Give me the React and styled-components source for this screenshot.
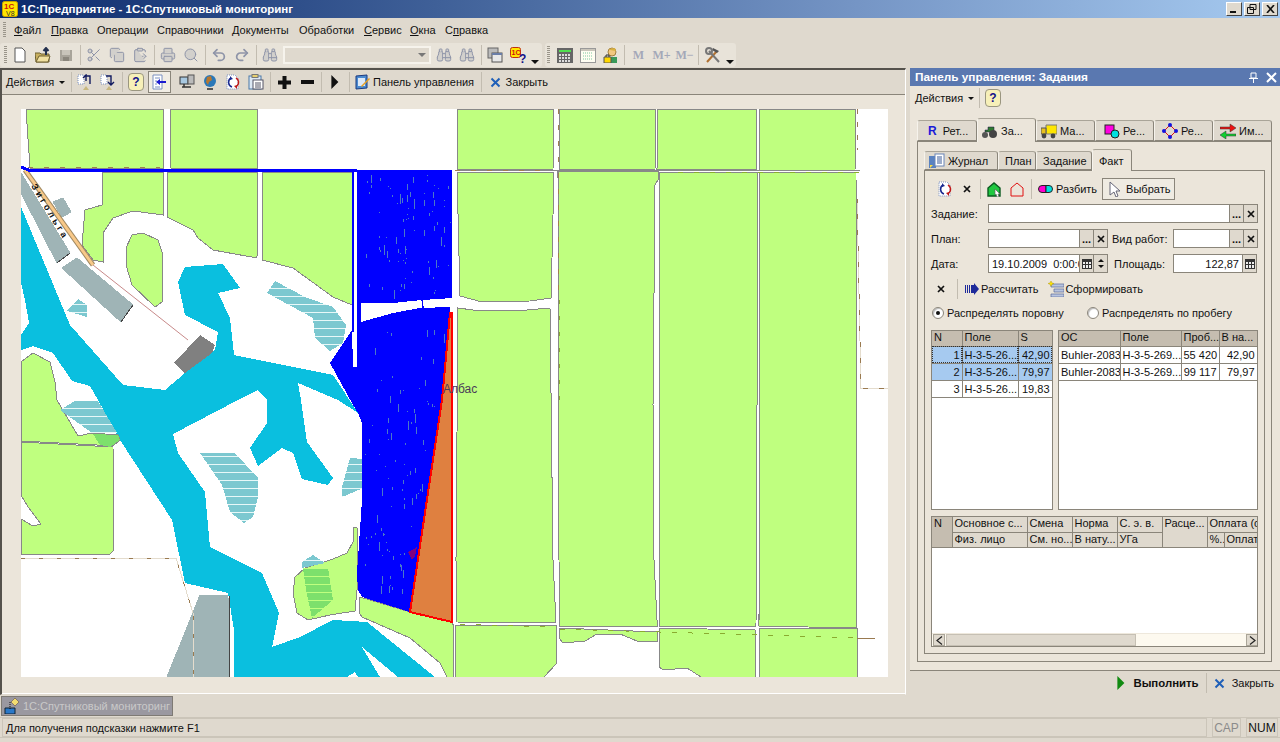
import React from 'react';
import styled, { createGlobalStyle } from 'styled-components';
import { Scissors, Copy, ClipboardPaste, Printer, Search, Undo2, Redo2, Binoculars } from 'lucide-react';

const uiFont = '"Liberation Sans", Arial, sans-serif';
const face = '#dfd9ce';
const panel = '#ebe5da';
const line = '#8a857a';
const soft = '#c2bcb0';

const GlobalStyle = createGlobalStyle`
  html, body { margin: 0; padding: 0; background: ${face}; }
  body { font: 11px ${uiFont}; color: #111; }
  * { box-sizing: border-box; }
`;

const Screen = styled.div`
  width: 1280px;
  height: 742px;
  display: flex;
  flex-direction: column;
  overflow: hidden;
  background: ${face};
`;

const TitleBar = styled.div`
  height: 18px;
  flex: none;
  display: flex;
  align-items: center;
  padding: 0 2px;
  background: linear-gradient(90deg, #0c2a6c, #3f6098 34%, #7595c5 67%, #a6caf0);
`;

const TitleText = styled.span`
  margin-left: 3px;
  color: #fff;
  font-size: 11.5px;
  font-weight: bold;
  flex: 1;
`;

const WinButton = styled.span`
  width: 16px;
  height: 14px;
  margin-left: 2px;
  display: flex;
  align-items: center;
  justify-content: center;
  background: ${face};
  border: 1px solid;
  border-color: #fff #444 #444 #fff;
`;

const MenuBar = styled.div`
  height: 24px;
  flex: none;
  display: flex;
  align-items: center;
  padding-left: 3px;
`;

const Grip = styled.span`
  width: 3px;
  height: ${p => p.$h || 16}px;
  margin-right: ${p => p.$gap || 0}px;
  flex: none;
  background: repeating-linear-gradient(180deg, #9a958a 0 1px, transparent 1px 2px);
`;

const MenuItem = styled.span`
  width: ${p => p.$w}px;
  flex: none;
  u { text-decoration-thickness: 1px; text-underline-offset: 1px; }
`;

const ToolRow = styled.div`
  height: 26px;
  flex: none;
  display: flex;
  align-items: flex-start;
`;

const ToolGroup = styled.div`
  height: 24px;
  margin: 1px 3px 0 ${p => p.$ml || 0}px;
  padding-left: ${p => p.$pl || 0}px;
  display: flex;
  align-items: center;
  background: #e8e3d9;
  border-radius: 3px;
`;

const Slot = styled.span`
  width: ${p => p.$w || 23}px;
  height: 22px;
  margin-left: ${p => p.$ml || 0}px;
  flex: none;
  display: flex;
  align-items: center;
  justify-content: center;
  color: #8e94a8;
  ${p => p.$pressed && `
    border: 1px solid #8a857a;
    background: #f1ede4;
  `}
`;

const Sep = styled.span`
  width: 5px;
  height: 20px;
  flex: none;
  display: flex;
  justify-content: center;
  &::before { content: ''; width: 1px; background: ${soft}; }
`;

const Combo = styled.span`
  width: 148px;
  height: 18px;
  margin-left: 1.5px;
  display: flex;
  flex: none;
  border: 2px solid #f6f3ec;
  background: ${face};
  justify-content: flex-end;
  align-items: center;
`;

const DropArrow = styled.span`
  width: 0;
  height: 0;
  flex: none;
  border-left: ${p => p.$s || 4}px solid transparent;
  border-right: ${p => p.$s || 4}px solid transparent;
  border-top: ${p => p.$s || 4}px solid ${p => p.$c || '#111'};
  margin-left: ${p => p.$ml || 0}px;
  margin-right: ${p => p.$mr || 0}px;
  margin-top: ${p => p.$mt || 0}px;
`;

const UpArrow = styled(DropArrow)`
  transform: rotate(180deg);
`;

const MaskM = styled.span`
  color: #a4a8b8;
  font: bold 12px "Liberation Serif", serif;
`;

const Workspace = styled.div`
  height: 627px;
  flex: none;
  display: flex;
`;

const MapWindow = styled.div`
  width: 906px;
  flex: none;
  display: flex;
  flex-direction: column;
  border-top: 2px solid #55524c;
  border-left: 2px solid #55524c;
  border-right: 1px solid #fff;
  border-bottom: 1px solid ${face};
  background: ${panel};
`;

const WindowBar = styled.div`
  height: 25px;
  flex: none;
  display: flex;
  align-items: center;
  background: ${face};
  border-bottom: 1px solid ${line};
  padding-left: 4px;
`;

const ActionMenu = styled.span`
  display: flex;
  align-items: center;
  width: ${p => p.$w}px;
  flex: none;
`;

const TextButton = styled.span`
  display: flex;
  align-items: center;
  flex: none;
  white-space: nowrap;
  gap: ${p => p.$gap || 3}px;
  margin-left: ${p => p.$ml || 0}px;
  height: ${p => (p.$pressed ? 22 : 20)}px;
  padding: 0 ${p => (p.$pressed ? 4 : 0)}px;
  ${p => p.$pressed && `border: 1px solid #8a857a; background: #efebe2;`}
`;

const Canvas = styled.div`
  flex: 1;
  padding: 14px 0 0 19px;
  border-bottom: 1px solid #fff;
`;

const MapSvg = styled.svg`
  display: block;
  background: #fff;
`;

const RoadLabel = styled.text`
  font: bold 9px ${uiFont};
  letter-spacing: 3px;
  fill: #111;
`;

const PlaceLabel = styled.text`
  font: 12px ${uiFont};
  fill: #4a3c58;
`;

const DockPanel = styled.div`
  width: 370px;
  margin-left: 4px;
  flex: none;
  display: flex;
  flex-direction: column;
  background: ${panel};
`;

const Caption = styled.div`
  height: 18px;
  flex: none;
  display: flex;
  align-items: center;
  padding: 0 3px 0 5px;
  gap: 8px;
  background: #5a78b0;
  color: #fff;
  font-size: 11.8px;
  font-weight: bold;
  span:first-child { flex: 1; }
`;

const ActionBar = styled.div`
  height: 24px;
  flex: none;
  display: flex;
  align-items: center;
  padding-left: 5px;
`;

const HelpBadge = styled.span`
  width: 16px;
  height: 18px;
  flex: none;
  margin-left: ${p => p.$ml || 0}px;
  display: flex;
  align-items: center;
  justify-content: center;
  background: #f7f0b8;
  border: 1px solid #9a9680;
  border-radius: 4px;
  color: #12128a;
  font: bold 12px ${uiFont};
`;

const DockBody = styled.div`
  height: 560px;
  flex: none;
  padding: 8px 8px 0 7px;
`;

const TabStrip = styled.div`
  display: flex;
  align-items: flex-end;
  height: ${p => p.$h}px;
  position: relative;
  z-index: 1;
`;

const Tab = styled.span`
  width: ${p => p.$w}px;
  height: ${p => (p.$active ? p.$h + 1 : p.$h - 2)}px;
  flex: none;
  display: flex;
  align-items: center;
  gap: 3px;
  padding-left: ${p => p.$pl || 4}px;
  margin-bottom: ${p => (p.$active ? -1 : 0)}px;
  border: 1px solid ${soft};
  border-color: #a9a498 ${line} ${line} #f6f3ec;
  border-bottom: ${p => (p.$active ? 'none' : `1px solid ${line}`)};
  border-radius: 3px 3px 0 0;
  background: ${p => (p.$active ? panel : face)};
`;

const TabLetter = styled.b`
  color: #1a1ad8;
  font-size: 12px;
  margin-right: 3px;
`;

const TabBody = styled.div`
  height: ${p => p.$h}px;
  border: 1px solid ${line};
  padding: ${p => p.$pad};
  background: ${panel};
`;

const SubBar = styled.div`
  height: 23px;
  display: flex;
  align-items: center;
  margin-left: ${p => p.$ml || 0}px;
`;

const Form = styled.div`
  margin-top: 4px;
  display: flex;
  flex-direction: column;
  gap: 6px;
`;

const FormRow = styled.div`
  height: 19px;
  display: flex;
  align-items: center;
`;

const FieldLabel = styled.span`
  width: ${p => p.$w}px;
  flex: none;
  white-space: nowrap;
  margin-left: ${p => p.$ml || 0}px;
`;

const Field = styled.span`
  width: ${p => p.$w}px;
  height: 100%;
  flex: none;
  display: flex;
  align-items: center;
  justify-content: ${p => (p.$right ? 'flex-end' : 'flex-start')};
  padding: 0 3px;
  background: #fff;
  border: 1px solid ${line};
  overflow: hidden;
  white-space: pre;
`;

const FieldBtn = styled.span`
  width: 14px;
  height: 100%;
  flex: none;
  display: flex;
  flex-direction: ${p => (p.$col ? 'column' : 'row')};
  align-items: center;
  justify-content: space-evenly;
  background: ${face};
  border: 1px solid ${line};
  border-left: none;
  font: bold 11px ${uiFont};
`;

const CommandBar = styled.div`
  height: 20px;
  margin-top: 6px;
  display: flex;
  align-items: center;
  padding-left: 6px;
`;

const RadioRow = styled.div`
  height: 14px;
  margin-top: 7px;
  display: flex;
  align-items: center;
`;

const Radio = styled.span`
  width: 12px;
  height: 12px;
  flex: none;
  margin-left: ${p => p.$ml || 0}px;
  margin-right: 3px;
  display: flex;
  align-items: center;
  justify-content: center;
  border-radius: 50%;
  background: #fff;
  border: 1px solid #8a857a;
  box-shadow: inset 1px 1px 1px #bbb;
  &::after {
    content: '';
    width: 4px;
    height: 4px;
    border-radius: 50%;
    background: ${p => (p.$on ? '#111' : 'transparent')};
  }
`;

const RadioLabel = styled.span`
  width: ${p => p.$w}px;
  flex: none;
  white-space: nowrap;
`;

const Tables = styled.div`
  margin-top: 10px;
  display: flex;
  gap: 5px;
  height: 180px;
`;

const TableBox = styled.div`
  width: ${p => p.$w}px;
  height: ${p => p.$h}px;
  flex: none;
  display: flex;
  flex-direction: column;
  margin-top: ${p => p.$mt || 0}px;
  border: 1px solid ${line};
  background: #fff;
  overflow: hidden;
`;

const Grid = styled.table`
  table-layout: fixed;
  border-collapse: collapse;
  width: ${p => p.$w}px;
  flex: none;
`;

const Head = styled.th`
  height: 15px;
  padding: 0 0 0 2px;
  font-weight: normal;
  text-align: left;
  vertical-align: top;
  white-space: nowrap;
  overflow: hidden;
  background: ${p => (p.$dark ? '#c5bdb0' : face)};
  border-right: 1px solid ${line};
  border-bottom: 1px solid ${line};
`;

const Cell = styled.td`
  height: 17px;
  padding: 0 2px;
  white-space: nowrap;
  overflow: hidden;
  text-align: ${p => (p.$num ? 'right' : 'left')};
  background: ${p => (p.$sel ? '#a6caf0' : '#fff')};
  border-right: 1px solid ${line};
  border-bottom: 1px solid ${line};
  ${p => p.$focus && 'outline: 1px dotted #333; outline-offset: -1px;'}
`;

const GridGap = styled.div`
  flex: 1;
`;

const ScrollBar = styled.div`
  height: 13px;
  flex: none;
  display: flex;
  align-items: stretch;
  background: #fdf9ef;
  border-top: 1px solid #eee8dc;
  padding: 0 1px;
`;

const ScrollBtn = styled.span`
  width: 12px;
  flex: none;
  display: flex;
  align-items: center;
  justify-content: center;
  background: ${face};
  border: 1px solid #aaa598;
  margin-left: ${p => p.$ml || 0}px;
`;

const ScrollThumb = styled.span`
  width: 190px;
  margin-left: 1px;
  flex: none;
  background: ${face};
  border: 1px solid #c6c0b4;
`;

const DockFooter = styled.div`
  height: 25px;
  flex: none;
  display: flex;
  align-items: center;
  justify-content: flex-end;
  padding-right: 6px;
  background: ${face};
  border-top: 1px solid ${line};
`;

const RunLabel = styled.span`
  font-size: 11.4px;
  font-weight: bold;
  margin-left: 8px;
`;

const TaskBar = styled.div`
  height: 23px;
  flex: none;
  display: flex;
  align-items: center;
  padding-left: 1px;
  border-bottom: 1px solid #cbc5b9;
`;

const TaskTab = styled.span`
  width: 172px;
  height: 20px;
  display: flex;
  align-items: center;
  gap: 3px;
  padding-left: 2px;
  background: #9a98a0;
  border: 1px solid #7e7a74;
  color: #c9c9c9;
  white-space: nowrap;
`;

const StatusBar = styled.div`
  height: 19px;
  flex: none;
  display: flex;
  align-items: stretch;
  padding: 0 2px;
  gap: 5px;
`;

const StatusBox = styled.span`
  width: ${p => p.$w}px;
  flex: ${p => (p.$grow ? 1 : 'none')};
  display: flex;
  align-items: center;
  justify-content: ${p => (p.$grow ? 'flex-start' : 'center')};
  padding-left: ${p => (p.$grow ? 3 : 0)}px;
  border: 1px solid #cbc5b9;
  font-size: ${p => (p.$grow ? 11 : 12)}px;
  color: ${p => (p.$dim ? '#8b8b8b' : '#111')};
`;

const BottomEdge = styled.div`
  flex: 1;
  border-top: 1px solid #cbc5b9;
`;

const Ico = ({ s = 16, children }) => (
  <svg width={s} height={s} viewBox="0 0 16 16">{children}</svg>
);

const Logo1C = () => (
  <svg width="16" height="16" viewBox="0 0 16 16">
    <rect x="0.5" y="0.5" width="15" height="15" rx="2" fill="#ffe600" stroke="#c8a000" />
    <text x="2" y="8" fontSize="8" fontWeight="bold" fill="#d01010" fontFamily="Liberation Sans">1C</text>
    <text x="4" y="15" fontSize="7" fill="#333" fontFamily="Liberation Sans">V8</text>
  </svg>
);

const DocNew = () => (
  <Ico><path d="M3 1h7l3 3v11H3z" fill="#fff" stroke="#555" /></Ico>
);

const FolderOpen = () => (
  <Ico>
    <path d="M0 6h5l1 1h8v8H1z" fill="#c8b060" stroke="#6e6030" />
    <path d="M1 15l3-6h11l-2 6z" fill="#f0e0a0" stroke="#6e6030" />
    <path d="M11 8V2M8.500 4L11 1l2.500 3" fill="none" stroke="#23304e" strokeWidth="2" />
  </Ico>
);

const Floppy = () => (
  <Ico>
    <path d="M2 3h12v11H2z" fill="#a8a49a" />
    <path d="M4 3h8v5H4z" fill="#c8c4ba" />
    <path d="M5 10h6v4H5z" fill="#8a867c" />
  </Ico>
);

const Muted = ({ icon: Icon }) => <Icon size={16} strokeWidth={1.5} color="#8e94a8" fill="#d2d0cc" />;

const WindowsIcon = () => (
  <Ico>
    <rect x="1" y="1" width="10" height="10" fill="#bbb" stroke="#666" />
    <rect x="5" y="6" width="10" height="9" fill="#e8e8e8" stroke="#555" />
    <path d="M5 6h10v2H5z" fill="#6a7ea8" />
  </Ico>
);

const HelpLogo = () => (
  <Ico>
    <rect x="0.5" y="0.5" width="10" height="10" rx="2" fill="#ffe600" stroke="#c03010" />
    <text x="1.500" y="8" fontSize="7" fontWeight="bold" fill="#d01010" fontFamily="Liberation Sans">1C</text>
    <text x="9" y="16" fontSize="12" fontWeight="bold" fill="#12128a" fontFamily="Liberation Sans">?</text>
  </Ico>
);

const CalcIcon = () => (
  <Ico>
    <rect x="0" y="1" width="16" height="15" fill="#666" />
    <rect x="2" y="3" width="12" height="2" fill="#50e050" />
    {[0, 1, 2].map(r => [0, 1, 2, 3].map(c => (
      <rect key={`${r}${c}`} x={2 + c * 3} y={7 + r * 3} width="2" height="2" fill="#ddd" />
    )))}
  </Ico>
);

const CalendarIcon = () => (
  <Ico>
    <rect x="0.5" y="1.500" width="15" height="14" fill="#fffef2" stroke="#999" />
    <path d="M1 2h14v2H1z" fill="#c9c5ba" />
    <path d="M3 6h10M3 9h10M3 12h10" stroke="#7cc7a0" strokeDasharray="1 1" />
  </Ico>
);

const UserLock = () => (
  <Ico>
    <circle cx="9" cy="5" r="4" fill="#f2c880" stroke="#a08040" />
    <path d="M6 2l6-1 1 3-6-1z" fill="#d8b040" />
    <path d="M7 10h7v6H7z" fill="#3a9a5a" />
    <path d="M1 10h7v6H1z" fill="#ffd800" stroke="#555" />
    <path d="M3 10V8h3v2" fill="none" stroke="#333" />
  </Ico>
);

const Tools = () => (
  <Ico>
    <path d="M2 15L12 4" stroke="#b07030" strokeWidth="2" />
    <path d="M14 15L4 4" stroke="#777" strokeWidth="2" />
    <path d="M8 1l6 3-2 2-5-3z" fill="#555" />
    <circle cx="4" cy="4" r="3" fill="none" stroke="#777" strokeWidth="2" />
  </Ico>
);

const ListArrow = ({ flip }) => (
  <Ico>
    <path d="M1 1h6v9H1z" fill="#fff" stroke="#7a90c0" strokeDasharray="1 1" />
    <path d={flip ? 'M6 2h5v8M8 8l3 3 3-3' : 'M13 10V2H8M6 4l3-3v6'} fill="none" stroke="#111a60" strokeWidth="1.400" />
    <path d="M9 12l3 4H6z" fill="#c8b880" />
  </Ico>
);

const DockLeft = () => (
  <Ico>
    <path d="M2 1h9v14H2z" fill="#fff" stroke="#7a90c0" />
    <path d="M4 4h5M4 7h2M4 10h2M4 13h5" stroke="#7a90c0" />
    <path d="M5 8l4-3v2h6v2H9v2z" fill="#1a1ad0" />
  </Ico>
);

const Network = () => (
  <Ico>
    <rect x="1" y="3" width="8" height="7" fill="#a8c8e0" stroke="#333" />
    <rect x="9" y="1" width="6" height="9" fill="#bbb" stroke="#555" />
    <path d="M3 13h9M5 10v3" stroke="#333" strokeWidth="1.500" />
  </Ico>
);

const Globe = () => (
  <Ico>
    <circle cx="8" cy="7" r="6" fill="#2a78b8" />
    <path d="M5 3l4-1 1 4-3 2-1 3-2-3z" fill="#b87830" />
    <path d="M5 15h6" stroke="#555" strokeWidth="2" />
  </Ico>
);

const Refresh = () => (
  <Ico>
    <path d="M2 1h8l3 3v11H2z" fill="#fff" stroke="#7a90c0" strokeDasharray="1 1" />
    <path d="M11 4a5 5 0 0 1 1 8" fill="none" stroke="#c01818" strokeWidth="1.500" />
    <path d="M7 13a5 5 0 0 1-1-9" fill="none" stroke="#1a2a90" strokeWidth="1.500" />
    <path d="M9 12l3 3v-4z" fill="#c01818" />
    <path d="M8 5L5 2v4z" fill="#1a2a90" />
  </Ico>
);

const ClipList = () => (
  <Ico>
    <rect x="1" y="2" width="12" height="13" fill="#dce8f4" stroke="#4a78a8" />
    <rect x="4" y="0.5" width="6" height="3" fill="#e8d070" stroke="#777" />
    <rect x="5" y="6" width="10" height="9" fill="#fff" stroke="#556" />
    <path d="M7 9h6M7 11h6M7 13h6" stroke="#556" />
  </Ico>
);

const PanelIcon = () => (
  <Ico>
    <path d="M1 2l11-1v13l-11 1z" fill="#4a8ad0" stroke="#1a3a80" />
    <path d="M3 4h7v8H3z" fill="#dce8f8" />
    <path d="M6 12l8-8 1 1-8 8z" fill="#e8a020" />
  </Ico>
);

const CloseX = ({ s = 11 }) => (
  <svg width={s} height={s} viewBox="0 0 11 11">
    <path d="M1.500 1.500l8 8M9.500 1.500l-8 8" stroke="#1f5fb8" strokeWidth="2" />
  </svg>
);

const SmallX = () => (
  <svg width="8" height="8" viewBox="0 0 8 8">
    <path d="M1 1l6 6M7 1L1 7" stroke="#111" strokeWidth="1.700" />
  </svg>
);

const Tractor = () => (
  <Ico>
    <path d="M6 4h6v5H3V7h3z" fill="#2f7a30" stroke="#214" strokeWidth="0.5" />
    <circle cx="11" cy="11" r="4" fill="#444" />
    <circle cx="3" cy="12" r="3" fill="#555" />
  </Ico>
);

const Truck = () => (
  <Ico>
    <path d="M5 2h11v9H5z" fill="#ffe600" stroke="#777" />
    <path d="M0 5h5v6H0z" fill="#e8c020" stroke="#555" />
    <circle cx="3" cy="13" r="2.400" fill="#444" />
    <circle cx="12" cy="13" r="2.400" fill="#444" />
  </Ico>
);

const Shapes = () => (
  <Ico>
    <rect x="1" y="2" width="9" height="9" fill="#ff00e0" stroke="#222" />
    <circle cx="11" cy="11" r="4" fill="#00e0e0" stroke="#222" />
  </Ico>
);

const NodeShape = () => (
  <Ico>
    <path d="M8 2l6 6-6 6-6-6z" fill="none" stroke="#e01010" />
    {[[8, 2], [14, 8], [8, 14], [2, 8]].map(([x, y]) => (
      <circle key={x + y * 20} cx={x} cy={y} r="2" fill="#1010e0" />
    ))}
  </Ico>
);

const SwapArrows = () => (
  <Ico>
    <path d="M0 4h10V1l6 4-6 4V6H0z" fill="#ee1010" stroke="#333" strokeWidth="0.5" />
    <path d="M16 11H6V8l-6 4 6 4v-3h10z" fill="#10d030" stroke="#333" strokeWidth="0.5" />
  </Ico>
);

const Journal = () => (
  <Ico>
    <rect x="0" y="3" width="7" height="12" fill="#5a82c0" />
    <path d="M1 12h3l-3 3z" fill="#ffe040" />
    <rect x="6" y="1" width="9" height="12" fill="#fff" stroke="#6a86b8" />
    <path d="M8 4h5M8 6h5M8 8h5M8 10h5" stroke="#3a5a98" />
  </Ico>
);

const Digitize = () => (
  <Ico>
    <path d="M2 7l6-5 6 5v8H2z" fill="#20c840" stroke="#0a5a20" strokeWidth="1.400" />
    <path d="M9 8l5 5-2 0 1 3-2 0-1-3-1 1z" fill="#fff" stroke="#666" strokeWidth="0.7" />
  </Ico>
);

const Outline = () => (
  <Ico><path d="M2 7l6-5 6 5v8H2z" fill="none" stroke="#e01010" /></Ico>
);

const Split = () => (
  <svg width="15" height="8" viewBox="0 0 15 8">
    <path d="M4 .5h4v7H4a3.500 3.500 0 0 1 0-7z" fill="#ff00d0" stroke="#222" />
    <path d="M8 .5h3a3.500 3.500 0 0 1 0 7H8z" fill="#00e0e0" stroke="#222" />
  </svg>
);

const Pointer = () => (
  <Ico><path d="M3 1l10 9H9l2 5-2 1-2-5-4 3z" fill="#fff" stroke="#667" /></Ico>
);

const CalcArrow = () => (
  <Ico>
    <path d="M1 4h1v8H1zM3 4h1v8H3zM5 4h1v8H5z" fill="#1e2a9a" />
    <path d="M7 4h3V2l5 6-5 6v-2H7z" fill="#1e2a9a" />
  </Ico>
);

const Generate = () => (
  <Ico>
    <path d="M3 3h13v3H3zM6 8h10v3H6zM3 13h13v3H3z" fill="#b8c4e0" stroke="#5a6a9a" strokeWidth="0.7" />
    <path d="M3 0l1 2 2 .5-2 .8-1 2-1-2L0 2.500 2 2z" fill="#ffe600" stroke="#a89000" strokeWidth="0.4" />
  </Ico>
);

const CalGrid = () => (
  <svg width="10" height="10" viewBox="0 0 10 10">
    <path d="M0 0h10v10H0z" fill="#333" />
    <path d="M1 3h2v2H1zM4 3h2v2H4zM7 3h2v2H7zM1 6h2v3H1zM4 6h2v3H4zM7 6h2v3H7z" fill="#eee" />
  </svg>
);

const Caret = ({ dir }) => (
  <svg width="7" height="9" viewBox="0 0 7 9">
    <path d={dir === 'left' ? 'M6 0.5L1 4.500l5 4' : 'M1 0.5l5 4-5 4'} fill="none" stroke="#222" strokeWidth="1.200" />
  </svg>
);

const TaskIcon = () => (
  <Ico>
    <path d="M1 10h10v6H1z" fill="#2a78c8" stroke="#123" />
    <path d="M6 4v7" stroke="#111" strokeDasharray="1 1" />
    <path d="M11 0l4 4-4 4-4-4z" fill="#f2dc70" stroke="#876" />
  </Ico>
);

const PlayArrow = ({ color, s = 14 }) => (
  <svg width={s * 0.7} height={s} viewBox="0 0 7 14">
    <path d="M0 0l7 7-7 7z" fill={color} />
  </svg>
);

const fields = [
  '26,109 163,109 163,168 30,168',
  '170,109 257,109 258,169 170,168',
  '102,172 163,172 163,215 133,211 113,218 103,233 103,262 93,260 82,245 85,210 102,205',
  '167,172 258,172 257,258 213,250 198,238 193,230 167,217',
  '262,172 352,173 352,305 333,297 293,268 262,260',
  '126,248 132,235 143,233 158,240 162,252 162,302 155,307 132,285 126,265',
  '21,362 33,353 50,362 55,382 57,400 78,436 92,433 118,435 120,440 113,446 97,445 40,442 21,441',
  '21,442 113,447 114,550 110,554 21,554 21,519 33,526 41,524 28,507 21,495',
  '295,577 305,568 333,559 347,553 353,542 354,527 357,528 357,590 355,611 330,615 308,620 297,613 293,593',
  '360,597 410,612 452,622 454,627 453,677 447,677 440,663 410,638 362,617 359,612',
  '457,109 554,109 553,169 457,169',
  '559,109 656,109 655,169 559,169',
  '658,109 756,109 757,169 657,169',
  '759,109 856,109 855,170 759,170',
  '457,172 554,172 552,258 551,298 530,301 482,302 460,296',
  '458,308 473,310 527,310 550,308 553,560 556,623 457,622 456,560',
  '558,171 658,171 658,180 655,185 653,405 654,560 657,620 657,626 560,626 559,560',
  '659,172 757,172 757,405 756,626 659,626',
  '760,172 856,172 857,628 759,626',
  '455,625 556,625 557,663 544,677 456,677',
  '559,628 657,632 657,641 637,641 620,634 597,634 585,641 563,643 559,638',
  '659,628 755,630 756,677 701,677 687,668 663,670 659,667',
  '759,628 857,628 857,677 759,677',
];

const water = '21,207 70,325 123,385 165,390 185,373 215,350 218,332 185,315 178,282 185,267 223,264 240,288 218,293 230,318 234,355 333,375 358,413 338,400 298,383 301,400 307,442 333,478 328,485 302,479 293,453 282,448 258,466 250,448 267,423 267,400 258,390 238,400 173,434 178,453 205,492 210,547 262,573 279,613 272,647 300,637 333,620 367,622 435,677 398,677 362,647 380,677 358,677 355,672 347,677 234,677 234,630 228,593 185,583 172,520 120,440 98,400 90,386 72,381 53,353 33,346 21,350 21,335 29,323 25,300 21,283';

const hatches = [
  '275,281 305,297 333,307 346,325 343,343 330,351 315,338 313,318 267,293',
  '78,299 87,305 87,317 67,311',
  '60,410 75,401 98,401 117,433 92,433',
  '200,453 235,453 258,478 258,497 253,517 244,523 230,512 222,485',
  '350,458 363,459 363,488 347,495 342,497 342,487',
  '302,562 313,555 325,563 302,568',
];

const grays = [
  '21,173 70,253 57,263 21,193',
  '53,202 63,198 71,212 62,217',
  '62,268 77,258 133,305 121,322',
  '200,595 228,596 229,677 167,677',
];

const blueTop = '357,170 452,170 452,298 422,300 393,303 361,303 361,322 393,313 420,308 450,307 450,313 442,400 410,612 362,597 358,590 357,573 362,500 362,423 358,413 353,405 330,363 352,330 353,367 357,367';

const speckles = (() => {
  const out = [];
  const rnd = n => {
    const v = Math.sin(n * 12.9898) * 43758.5453;
    return v - Math.floor(v);
  };
  for (let i = 0; i < 170; i += 1) {
    const lower = i > 80;
    const a = rnd(i * 3 + 1);
    const b = rnd(i * 3 + 2);
    const c = rnd(i * 3 + 3);
    const y = lower ? 322 + a * 270 : 175 + a * 118;
    const maxX = lower ? 448 - (y - 313) * 0.14 : 450;
    const x = 364 + b * (maxX - 364);
    out.push({ x: Math.round(x), y: Math.round(y), h: 1 + Math.round(c * c * c * 9) });
  }
  return out;
})();

const FieldMap = () => (
  <MapSvg width="867" height="568" viewBox="21 109 867 568" shapeRendering="crispEdges">
    <defs>
      <pattern id="hatch" width="8" height="8" patternUnits="userSpaceOnUse">
        <rect width="8" height="8" fill="#7cc8d0" />
        <rect width="8" height="1" fill="#e8f8f8" />
      </pattern>
      <pattern id="hatchGreen" width="8" height="8" patternUnits="userSpaceOnUse">
        <rect width="8" height="8" fill="#7de06c" />
        <rect width="8" height="1" fill="#bfff7f" />
      </pattern>
    </defs>
    <polygon points={water} fill="#0abfdf" />
    {fields.map(pts => (
      <polygon key={pts} points={pts} fill="#bfff7f" stroke="#888" strokeWidth="1" />
    ))}
    {hatches.map(pts => <polygon key={pts} points={pts} fill="url(#hatch)" />)}
    <polygon points="303,568 328,568 333,600 312,618 306,590" fill="url(#hatchGreen)" />
    <polygon points="93,434 118,435 120,440 110,447 100,445" fill="#7de06c" />
    {grays.map(pts => <polygon key={pts} points={pts} fill="#9fb4b6" stroke="#9fb4b6" />)}
    <path d="M229 596V677M133 305L121 322M70 253L57 263" stroke="#444" fill="none" />
    <polygon points="200,335 215,345 212,353 185,373 174,363" fill="#808080" />
    <path d="M25 170L93 265" stroke="#a08860" strokeWidth="5" fill="none" shapeRendering="auto" />
    <path d="M25 170L93 265" stroke="#f8c888" strokeWidth="3" fill="none" shapeRendering="auto" />
    <path d="M93 265L188 340" stroke="#c88a8a" fill="none" shapeRendering="auto" />
    <RoadLabel transform="rotate(59 31 186)" x="31" y="186">Зигольга</RoadLabel>
    <path d="M457 170H860" stroke="#888" fill="none" />
    <path d="M455 170.5H545" stroke="#a08050" strokeWidth="1.400" strokeDasharray="5 11" fill="none" />
    <path d="M678 172.5H860" stroke="#8aaa30" strokeWidth="1" strokeDasharray="5 11" fill="none" />
    <path d="M28 167H160" stroke="#a08050" strokeDasharray="5 11" fill="none" />
    <path d="M558 109V300" stroke="#a08050" strokeDasharray="5 11" fill="none" />
    <path d="M559 300V400" stroke="#8aaa30" strokeDasharray="4 12" fill="none" />
    <path d="M857 198L861 388H888" stroke="#e4dccd" fill="none" />
    <path d="M857 198L861 388H888" stroke="#9a7a50" strokeDasharray="5 11" fill="none" />
    <path d="M857 109V150" stroke="#9a7a50" strokeDasharray="5 8" fill="none" />
    <path d="M857 638.5H875" stroke="#9a7a50" fill="none" />
    <path d="M460 624L545 627M560 629L857 638" stroke="#8aaa30" strokeDasharray="5 11" fill="none" />
    <path d="M21 558H176L193 613V677" stroke="#e4dccd" fill="none" />
    <path d="M21 558H176L193 613V677" stroke="#9a7a50" strokeDasharray="4 14" fill="none" />
    <path d="M21 167L30 170.500H357" stroke="#0000ff" strokeWidth="3" fill="none" />
    <path d="M353 170V332" stroke="#0000ff" strokeWidth="2.500" fill="none" />
    <path d="M422 299L423 308" stroke="#0000ff" strokeWidth="1.500" fill="none" />
    <polygon points={blueTop} fill="#0000ff" />
    {speckles.map(t => (
      <rect key={`${t.x}-${t.y}`} x={t.x} y={t.y} width="1" height={t.h} fill="#4b78c8" />
    ))}
    <polygon points="408,552 414,549 417,547 415,556 412,560" fill="#800080" />
    <polygon points="450,313 452,313 452,622 410,612 442,400" fill="#df8040" stroke="#ff0000" strokeWidth="2" />
    <PlaceLabel x="443" y="393">Албас</PlaceLabel>
  </MapSvg>
);

const menu = [
  [<><u>Ф</u>айл</>, 37], [<><u>П</u>равка</>, 46], ['Операции', 60], ['Справочники', 75],
  ['Документы', 67], ['Обработки', 65], [<><u>С</u>ервис</>, 46], [<><u>О</u>кна</>, 35], [<>С<u>п</u>равка</>, 60],
];

const MainToolbars = () => (
  <ToolRow>
    <ToolGroup $pl={4}>
      <Grip $h={18} $gap={1.5} />
      <Slot><DocNew /></Slot>
      <Slot><FolderOpen /></Slot>
      <Slot><Floppy /></Slot>
      <Sep />
      <Slot><Muted icon={Scissors} /></Slot>
      <Slot><Muted icon={Copy} /></Slot>
      <Slot><Muted icon={ClipboardPaste} /></Slot>
      <Sep />
      <Slot><Muted icon={Printer} /></Slot>
      <Slot><Muted icon={Search} /></Slot>
      <Sep />
      <Slot><Undo2 size={16} strokeWidth={2.6} color="#8e94a8" /></Slot>
      <Slot><Redo2 size={16} strokeWidth={2.6} color="#8e94a8" /></Slot>
      <Sep />
      <Slot><Muted icon={Binoculars} /></Slot>
      <Combo><DropArrow $mr={3} $c="#777" /></Combo>
      <Slot $ml={1.5}><Muted icon={Binoculars} /></Slot>
      <Slot><Muted icon={Binoculars} /></Slot>
      <Sep />
      <Slot><WindowsIcon /></Slot>
      <Slot><HelpLogo /></Slot>
      <DropArrow $ml={1} $mr={3} $mt={13} />
    </ToolGroup>
    <ToolGroup $pl={2}>
      <Grip $h={18} $gap={3.5} />
      <Slot><CalcIcon /></Slot>
      <Slot><CalendarIcon /></Slot>
      <Slot><UserLock /></Slot>
      <Sep />
      <Slot><MaskM>M</MaskM></Slot>
      <Slot><MaskM>M+</MaskM></Slot>
      <Slot><MaskM>M−</MaskM></Slot>
      <Sep />
      <Slot><Tools /></Slot>
      <DropArrow $ml={2} $mr={2} $mt={13} />
    </ToolGroup>
  </ToolRow>
);

const MapToolbar = () => (
  <WindowBar>
    <ActionMenu $w={62.5}>Действия<DropArrow $s={3} $ml={5} /></ActionMenu>
    <Sep />
    <Slot><ListArrow /></Slot>
    <Slot><ListArrow flip /></Slot>
    <Sep />
    <Slot><HelpBadge>?</HelpBadge></Slot>
    <Slot $pressed><DockLeft /></Slot>
    <Slot $ml={5}><Network /></Slot>
    <Slot><Globe /></Slot>
    <Slot><Refresh /></Slot>
    <Slot><ClipList /></Slot>
    <Sep />
    <Slot>
      <svg width="13" height="13" viewBox="0 0 13 13"><path d="M4.500 0h4v4.500H13v4H8.500V13h-4V8.500H0v-4h4.500z" fill="#111" /></svg>
    </Slot>
    <Slot>
      <svg width="13" height="4" viewBox="0 0 13 4"><path d="M0 0h13v4H0z" fill="#111" /></svg>
    </Slot>
    <Sep />
    <Slot><PlayArrow color="#111" /></Slot>
    <Sep />
    <TextButton $ml={3.5} $gap={2}><PanelIcon />Панель управления</TextButton>
    <TextButton $ml={5}><Sep /></TextButton>
    <TextButton $ml={5.5} $gap={5}><CloseX />Закрыть</TextButton>
  </WindowBar>
);

const OuterTabs = () => (
  <TabStrip $h={23}>
    <Tab $w={60} $h={23} $pl={10}><TabLetter>R</TabLetter>Рет...</Tab>
    <Tab $w={59} $h={23} $active><Tractor />За...</Tab>
    <Tab $w={59} $h={23}><Truck />Ма...</Tab>
    <Tab $w={59} $h={23} $pl={8}><Shapes />Ре...</Tab>
    <Tab $w={59} $h={23} $pl={7}><NodeShape />Ре...</Tab>
    <Tab $w={59} $h={23} $pl={6}><SwapArrows />Им...</Tab>
  </TabStrip>
);

const InnerTabs = () => (
  <TabStrip $h={21}>
    <Tab $w={74} $h={21}><Journal />Журнал</Tab>
    <Tab $w={38} $h={21} $pl={6}>План</Tab>
    <Tab $w={56} $h={21} $pl={6}>Задание</Tab>
    <Tab $w={40} $h={21} $pl={6} $active>Факт</Tab>
  </TabStrip>
);

const TaskForm = () => (
  <Form>
    <FormRow>
      <FieldLabel $w={57}>Задание:</FieldLabel>
      <Field $w={242} />
      <FieldBtn>...</FieldBtn>
      <FieldBtn><SmallX /></FieldBtn>
    </FormRow>
    <FormRow>
      <FieldLabel $w={57}>План:</FieldLabel>
      <Field $w={92} />
      <FieldBtn>...</FieldBtn>
      <FieldBtn><SmallX /></FieldBtn>
      <FieldLabel $w={61} $ml={4}>Вид работ:</FieldLabel>
      <Field $w={57} />
      <FieldBtn>...</FieldBtn>
      <FieldBtn><SmallX /></FieldBtn>
    </FormRow>
    <FormRow>
      <FieldLabel $w={57}>Дата:</FieldLabel>
      <Field $w={92}>19.10.2009  0:00:00</Field>
      <FieldBtn><CalGrid /></FieldBtn>
      <FieldBtn $col>
        <UpArrow $s={3} />
        <DropArrow $s={3} />
      </FieldBtn>
      <FieldLabel $w={59} $ml={6}>Площадь:</FieldLabel>
      <Field $w={70} $right>122,87</Field>
      <FieldBtn><CalGrid /></FieldBtn>
    </FormRow>
  </Form>
);

const PlanGrid = () => (
  <TableBox $w={122} $h={180}>
    <Grid $w={120}>
      <colgroup><col width="30" /><col width="56" /><col width="34" /></colgroup>
      <thead>
        <tr><Head $dark>N</Head><Head $dark>Поле</Head><Head $dark>S</Head></tr>
      </thead>
      <tbody>
        <tr><Cell $num $sel $focus>1</Cell><Cell $sel $focus>Н-3-5-26...</Cell><Cell $num $sel $focus>42,90</Cell></tr>
        <tr><Cell $num $sel>2</Cell><Cell $sel>Н-3-5-26...</Cell><Cell $num $sel>79,97</Cell></tr>
        <tr><Cell $num>3</Cell><Cell>Н-3-5-26...</Cell><Cell $num>19,83</Cell></tr>
      </tbody>
    </Grid>
  </TableBox>
);

const MachineGrid = () => (
  <TableBox $w={200} $h={180}>
    <Grid $w={198}>
      <colgroup><col width="61" /><col width="61" /><col width="38" /><col width="38" /></colgroup>
      <thead>
        <tr><Head $dark>ОС</Head><Head $dark>Поле</Head><Head $dark>Проб...</Head><Head $dark>В на...</Head></tr>
      </thead>
      <tbody>
        <tr><Cell>Buhler-2083</Cell><Cell>Н-3-5-269...</Cell><Cell $num>55 420</Cell><Cell $num>42,90</Cell></tr>
        <tr><Cell>Buhler-2083</Cell><Cell>Н-3-5-269...</Cell><Cell $num>99 117</Cell><Cell $num>79,97</Cell></tr>
      </tbody>
    </Grid>
  </TableBox>
);

const WorkerGrid = () => (
  <TableBox $w={327} $h={131} $mt={6}>
    <Grid $w={325}>
      <colgroup>
        {[20, 75, 45, 45, 45, 45, 17, 33].map((w, i) => <col key={i} width={w} />)}
      </colgroup>
      <thead>
        <tr>
          <Head $dark rowSpan={2}>N</Head>
          <Head>Основное с...</Head>
          <Head>Смена</Head>
          <Head>Норма</Head>
          <Head>С. э. в.</Head>
          <Head rowSpan={2}>Расце...</Head>
          <Head colSpan={2}>Оплата (о</Head>
        </tr>
        <tr>
          <Head>Физ. лицо</Head>
          <Head>См. но...</Head>
          <Head>В нату...</Head>
          <Head>УГа</Head>
          <Head>%..</Head>
          <Head>Оплат</Head>
        </tr>
      </thead>
    </Grid>
    <GridGap />
    <ScrollBar>
      <ScrollBtn><Caret dir="left" /></ScrollBtn>
      <ScrollThumb />
      <ScrollBtn $ml={110}><Caret dir="right" /></ScrollBtn>
    </ScrollBar>
  </TableBox>
);

const ControlPanel = () => (
  <DockPanel>
    <Caption>
      <span>Панель управления: Задания</span>
      <svg width="9" height="11" viewBox="0 0 9 11"><path d="M2 1h5v5H2zM0 6.500h9M4.500 7v4" fill="none" stroke="#fff" /></svg>
      <svg width="11" height="11" viewBox="0 0 11 11"><path d="M1 1l9 9M10 1l-9 9" stroke="#fff" strokeWidth="2" /></svg>
    </Caption>
    <ActionBar>
      <ActionMenu $w={62}>Действия<DropArrow $s={3} $ml={5} /></ActionMenu>
      <Sep />
      <HelpBadge $ml={3}>?</HelpBadge>
    </ActionBar>
    <DockBody>
      <OuterTabs />
      <TabBody $h={521} $pad="7px 6px">
        <InnerTabs />
        <TabBody $h={484} $pad="6px 6px">
          <SubBar $ml={2}>
            <Slot><Refresh /></Slot>
            <Slot $w={22}><SmallX /></Slot>
            <Sep />
            <Slot $w={22}><Digitize /></Slot>
            <Slot $w={24}><Outline /></Slot>
            <Sep />
            <TextButton $ml={4}><Split />Разбить</TextButton>
            <TextButton $ml={5} $pressed><Pointer />Выбрать</TextButton>
          </SubBar>
          <TaskForm />
          <CommandBar>
            <SmallX />
            <TextButton $ml={9.5}><Sep /></TextButton>
            <TextButton $ml={4.5} $gap={1}><CalcArrow />Рассчитать</TextButton>
            <TextButton $ml={10} $gap={1}><Generate />Сформировать</TextButton>
          </CommandBar>
          <RadioRow>
            <Radio $on $ml={1} />
            <RadioLabel $w={140}>Распределять поровну</RadioLabel>
            <Radio />
            <RadioLabel $w={150}>Распределять по пробегу</RadioLabel>
          </RadioRow>
          <Tables>
            <PlanGrid />
            <MachineGrid />
          </Tables>
          <WorkerGrid />
        </TabBody>
      </TabBody>
    </DockBody>
    <DockFooter>
      <PlayArrow color="#118a11" />
      <RunLabel>Выполнить</RunLabel>
      <TextButton $ml={5}><Sep /></TextButton>
      <TextButton $ml={5} $gap={7}><CloseX />Закрыть</TextButton>
    </DockFooter>
  </DockPanel>
);

const App = () => (
  <>
    <GlobalStyle />
    <Screen>
      <TitleBar>
        <Logo1C />
        <TitleText>1С:Предприятие - 1С:Спутниковый мониторинг</TitleText>
        <WinButton><svg width="8" height="8" viewBox="0 0 8 8"><path d="M0 6h6v2H0z" fill="#111" /></svg></WinButton>
        <WinButton><svg width="10" height="10" viewBox="0 0 10 10"><path d="M3 .5h6v5H3zM.5 3.500h6v6H.5z" fill="#dfd9ce" stroke="#111" /></svg></WinButton>
        <WinButton><svg width="9" height="8" viewBox="0 0 9 8"><path d="M1 0l7 8M8 0L1 8" stroke="#111" strokeWidth="1.600" /></svg></WinButton>
      </TitleBar>
      <MenuBar>
        <Grip $gap={8} />
        {menu.map(([label, w], i) => <MenuItem key={i} $w={w}>{label}</MenuItem>)}
      </MenuBar>
      <MainToolbars />
      <Workspace>
        <MapWindow>
          <MapToolbar />
          <Canvas><FieldMap /></Canvas>
        </MapWindow>
        <ControlPanel />
      </Workspace>
      <TaskBar>
        <TaskTab><TaskIcon />1С:Спутниковый мониторинг</TaskTab>
      </TaskBar>
      <StatusBar>
        <StatusBox $grow>Для получения подсказки нажмите F1</StatusBox>
        <StatusBox $w={29} $dim>CAP</StatusBox>
        <StatusBox $w={32}>NUM</StatusBox>
      </StatusBar>
      <BottomEdge />
    </Screen>
  </>
);

export default App;
